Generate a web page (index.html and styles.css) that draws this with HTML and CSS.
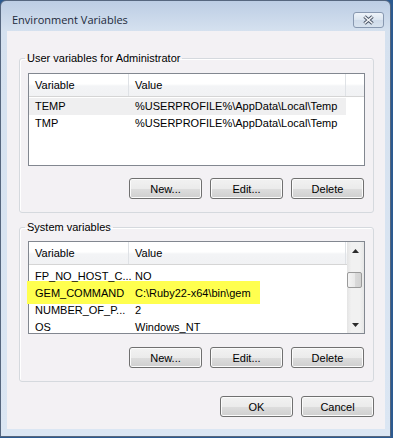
FILE: index.html
```html
<!DOCTYPE html>
<html lang="en">
<head>
    <meta charset="UTF-8">
    <title>Environment Variables</title>
    <link rel="stylesheet" href="styles.css">
</head>
<body>
    <div class="window">
        <div class="titlebar">
            <span class="title">Environment Variables</span>
            <button type="button" class="close">
                <svg width="13" height="10" viewBox="0 0 13 10">
                    <path d="M2.5 1.5 L10.5 8.5 M10.5 1.5 L2.5 8.5" stroke="#4b5668" stroke-width="3.6" fill="none"/>
                    <path d="M2.5 1.5 L10.5 8.5 M10.5 1.5 L2.5 8.5" stroke="#f4f6f9" stroke-width="1.6" fill="none"/>
                </svg>
            </button>
        </div> <!-- titlebar end -->

        <div class="client">
            <fieldset class="group">
                <legend>User variables for Administrator</legend>
                <div class="list">
                    <div class="table">
                        <div class="head">
                            <span class="cell name">Variable</span>
                            <span class="cell value">Value</span>
                        </div>
                        <div class="rows">
                            <div class="row selected"><span class="cell name">TEMP</span><span class="cell value">%USERPROFILE%\AppData\Local\Temp</span></div>
                            <div class="row"><span class="cell name">TMP</span><span class="cell value">%USERPROFILE%\AppData\Local\Temp</span></div>
                        </div>
                    </div>
                </div>
                <div class="buttons">
                    <button type="button" class="btn">New...</button>
                    <button type="button" class="btn">Edit...</button>
                    <button type="button" class="btn">Delete</button>
                </div>
            </fieldset> <!-- user group end -->

            <fieldset class="group system">
                <legend>System variables</legend>
                <div class="list">
                    <div class="mark"></div>
                    <div class="table">
                        <div class="head">
                            <span class="cell name">Variable</span>
                            <span class="cell value">Value</span>
                        </div>
                        <div class="rows">
                            <div class="row"><span class="cell name">FP_NO_HOST_C...</span><span class="cell value">NO</span></div>
                            <div class="row"><span class="cell name">GEM_COMMAND</span><span class="cell value">C:\Ruby22-x64\bin\gem</span></div>
                            <div class="row"><span class="cell name">NUMBER_OF_P...</span><span class="cell value">2</span></div>
                            <div class="row"><span class="cell name">OS</span><span class="cell value">Windows_NT</span></div>
                        </div>
                    </div>
                    <div class="scrollbar">
                        <div class="arrow">
                            <svg width="7" height="4" viewBox="0 0 7 4"><path d="M0 4 L3.5 0 L7 4 Z" fill="#2b2b2b"/></svg>
                        </div>
                        <div class="thumb"></div>
                        <div class="track"></div>
                        <div class="arrow">
                            <svg width="7" height="4" viewBox="0 0 7 4"><path d="M0 0 L3.5 4 L7 0 Z" fill="#2b2b2b"/></svg>
                        </div>
                    </div>
                </div>
                <div class="buttons">
                    <button type="button" class="btn">New...</button>
                    <button type="button" class="btn">Edit...</button>
                    <button type="button" class="btn">Delete</button>
                </div>
            </fieldset> <!-- system group end -->

            <div class="footer">
                <button type="button" class="btn">OK</button>
                <button type="button" class="btn">Cancel</button>
            </div>
        </div> <!-- client end -->
    </div> <!-- window end -->
</body>
</html>
```

FILE: styles.css
```css
body {
    margin: 0;
    background-color: #2c5a90;
}

body * {
    font-family: "Liberation Sans", Arial, sans-serif;
    font-size: 11px;
    color: #000;
}

div.window {
    width: 391px;
    height: 437px;
    box-sizing: border-box;
    border: 1px solid #56677f;
    border-radius: 6px 6px 0 0;
    background: linear-gradient(#bccde4, #d5e1ef 30px, #dbe6f3);
    padding: 0 5px 7px 6px;
}

div.window div.titlebar {
    height: 30px;
    box-sizing: border-box;
    padding: 11px 1px 0 5px;
    display: flex;
    justify-content: space-between;
    align-items: flex-start;
}

div.titlebar span.title {
    font-family: "Open Sans", sans-serif;
    font-size: 11px;
    line-height: 16px;
    color: #1c2a3b;
}

div.titlebar button.close {
    width: 31px;
    height: 16px;
    padding: 0;
    border: 1px solid #8898b0;
    border-radius: 3px;
    background: linear-gradient(#eef3f9, #dbe5f0 50%, #cfdbea 51%, #d8e3ef);
    display: flex;
    align-items: center;
    justify-content: center;
}

div.window div.client {
    height: 398px;
    box-sizing: border-box;
    background-color: #f3f1f4;
    padding: 19px 11px 0 12px;
}

fieldset.group {
    margin: 0;
    min-width: 0;
    padding: 7px 8px 13px;
    border: 1px solid #d5d9de;
    border-radius: 3px;
    box-shadow: inset 1px 1px 0 #fff;
}

fieldset.group legend {
    margin-left: -3px;
    padding: 0 2px;
    line-height: 16px;
}

fieldset.system {
    margin-top: 6px;
    padding-top: 6px;
}

div.list {
    height: 93px;
    box-sizing: border-box;
    border: 1px solid #828790;
    background-color: #fff;
    position: relative;
    display: flex;
}

div.list div.table {
    flex: 1;
    position: relative;
}

div.list div.head {
    height: 23px;
    box-sizing: border-box;
    display: flex;
    border-bottom: 1px solid #d5d5d5;
    background: linear-gradient(#fff 45%, #f3f4f6 55%, #f1f2f4);
}

div.list .cell {
    box-sizing: border-box;
    padding-left: 6px;
    white-space: nowrap;
}

div.list div.head .cell {
    line-height: 22px;
    border-right: 1px solid #dfe2e6;
}

div.list .name {
    width: 100px;
}

div.list .value {
    width: 217px;
}

div.list div.rows {
    padding-top: 1px;
}

fieldset.system div.list div.rows {
    padding-top: 3px;
}

div.list div.row {
    width: 317px;
    height: 17px;
    line-height: 17px;
    display: flex;
}

div.list div.row.selected {
    background-color: #efeff0;
}

/* yellow marker drawn over the list */
div.list div.mark {
    position: absolute;
    left: -2px;
    top: 39px;
    width: 233px;
    height: 23px;
    background-color: #ffff4f;
}

div.list div.scrollbar {
    width: 17px;
    display: flex;
    flex-direction: column;
    background: linear-gradient(90deg, #e4e4e4, #f1f1f1 25%, #f1f1f1 75%, #e6e6e6);
}

div.scrollbar div.arrow {
    height: 17px;
    display: flex;
    align-items: center;
    justify-content: center;
}

div.scrollbar div.thumb {
    margin-top: 13px;
    width: 15px;
    height: 16px;
    box-sizing: border-box;
    border: 1px solid #9a9a9a;
    border-radius: 2px;
    background: linear-gradient(90deg, #f4f4f4, #e9e9e9 50%, #dadada 51%, #d2d2d2);
}

div.scrollbar div.track {
    flex: 1;
}

div.buttons {
    margin-top: 12px;
    padding-right: 1px;
    display: flex;
    justify-content: flex-end;
    gap: 8px;
}

fieldset.system div.buttons {
    margin-top: 13px;
}

div.footer {
    margin-top: 14px;
    display: flex;
    justify-content: flex-end;
    gap: 8px;
}

button.btn {
    width: 73px;
    height: 21px;
    padding: 0;
    border: 1px solid #707070;
    border-radius: 3px;
    background: linear-gradient(#f2f2f2, #ebebeb 50%, #dddddd 51%, #cfcfcf);
    box-shadow: inset 0 0 0 1px #fbfbfb;
}
```
